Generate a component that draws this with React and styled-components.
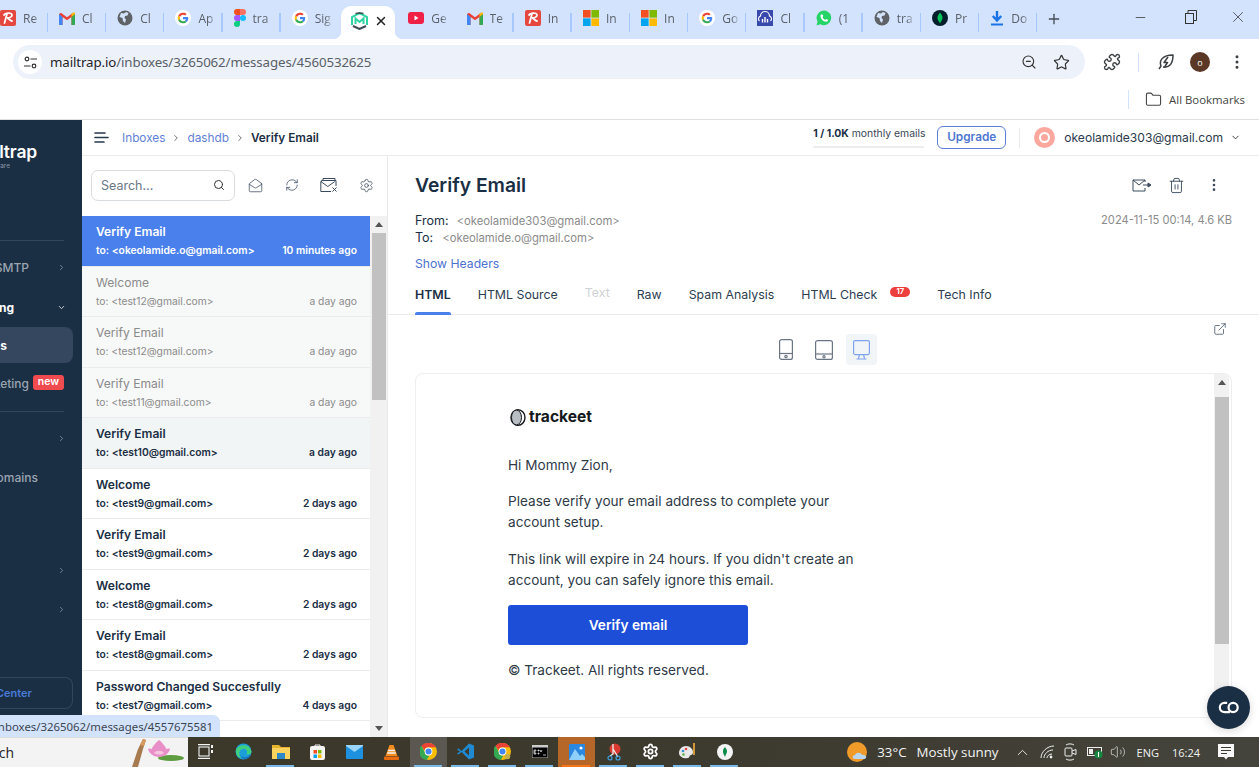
import React from "react";
import styled, { createGlobalStyle } from "styled-components";
import {
  Search, ZoomOut, Star, EllipsisVertical, Minus, X, Plus, Folder, ChevronRight, ChevronDown,
  MailOpen, RefreshCw, Settings, ExternalLink, Trash2, Puzzle, ChevronUp, Volume2,
} from "lucide-react";

const Global = createGlobalStyle`
  html, body { margin: 0; padding: 0; height: 767px; overflow: hidden; background: #fff; }
  body { font-family: Inter, "Noto Sans", sans-serif; }
  * { box-sizing: border-box; }
  svg { flex-shrink: 0; }
`;

const Page = styled.div`position: relative; width: 1259px; height: 767px; overflow: hidden; display: flex; flex-direction: column;`;

/* ---------- browser chrome ---------- */
const TabStrip = styled.div`height: 39px; background: #d3e3fd; display: flex; align-items: stretch; flex-shrink: 0;`;
const Tab = styled.div`
  width: ${p => (p.$first ? 48 : 58.2)}px; flex-shrink: 0; display: flex; align-items: center; gap: 7px;
  padding: 0 6px 3px ${p => (p.$first ? 0 : 11)}px; position: relative; overflow: hidden;
  &::after {
    content: ""; display: ${p => (p.$sep ? "block" : "none")}; position: absolute; right: 0; top: 13px; height: 19px; width: 1.5px; background: #a8c7fa;
  }
`;
const ActiveTab = styled.div`
  width: 54px; flex-shrink: 0; background: #fff; border-radius: 10px 10px 0 0; display: flex; align-items: center;
  justify-content: center; gap: 6px; padding: 0 0 4px 3px; position: relative; margin: 6px 2px 0 2.4px;
  &::before, &::after { content: ""; position: absolute; bottom: 0; width: 8px; height: 8px; }
  &::before { left: -8px; background: radial-gradient(circle at 0 0, #d3e3fd 8px, #fff 8.5px); }
  &::after { right: -8px; background: radial-gradient(circle at 100% 0, #d3e3fd 8px, #fff 8.5px); }
`;
const TabLabel = styled.span`
  font: 12px "Open Sans", sans-serif; color: #5a6068; overflow: hidden; white-space: nowrap; flex: 1; min-width: 0;
  -webkit-mask-image: linear-gradient(90deg, #000 55%, transparent 100%);
`;
const NewTab = styled.div`width: 33px; display: flex; align-items: center; justify-content: center; color: #444b55; padding-bottom: 2px;`;
const WindowButtons = styled.div`margin-left: auto; display: flex; color: #333;`;
const WindowButton = styled.div`width: ${p => p.$w}px; height: 34px; display: flex; align-items: center; justify-content: center;`;
const Toolbar = styled.div`height: 46px; display: flex; align-items: center; padding: 0 0 0 13px; background: #fff; flex-shrink: 0;`;
const Omnibox = styled.div`
  width: 1072px; height: 34px; border-radius: 17px; background: #edf2fa; display: flex; align-items: center; padding: 0 14px 0 5px; color: #333;
`;
const SiteChip = styled.div`width: 24px; height: 24px; border-radius: 50%; background: #fff; display: flex; align-items: center; justify-content: center; margin-right: 8px;`;
const Url = styled.div`font: 13.3px "Noto Sans", sans-serif; color: #5a6068; letter-spacing: -0.12px; b { font-weight: 400; color: #1f2329; } flex: 1;`;
const OmniIcons = styled.div`display: flex; gap: 16px; align-items: center; padding-right: 1px;`;
const ToolIcons = styled.div`display: flex; align-items: center; color: #3c4043; flex: 1; padding-left: 18px;`;
const VSep = styled.div`width: 1px; height: 19px; background: #d3e3fd; margin: 0 ${p => p.$m || 12}px;`;
const ProfileDot = styled.div`
  width: 20px; height: 20px; border-radius: 50%; background: #5a3825; color: #fff; font: 9px "Open Sans", sans-serif; display: flex; align-items: center;
  justify-content: center; margin: 0 18px 0 14px;
`;
const BookmarkBar = styled.div`
  height: 35px; display: flex; align-items: center; justify-content: flex-end; padding: 0 14px 6px 0; border-bottom: 1px solid #e0e0e0; flex-shrink: 0; background: #fff;
`;
const BookmarkText = styled.span`font: 11.4px "Open Sans", sans-serif; color: #444; margin-left: 7px;`;

/* ---------- app ---------- */
const App_ = styled.div`flex: 1; display: flex; min-height: 0;`;
const Sidebar = styled.aside`width: 82px; background: #1a2e44; overflow: hidden; flex-shrink: 0; display: flex; flex-direction: column; padding-top: 24px;`;
const LogoRow = styled.div`
  display: flex; justify-content: flex-end; width: 37px; font: 600 17.500px/16px Inter, sans-serif; color: #fff; white-space: nowrap; letter-spacing: -.2px;
`;
const LogoSub = styled.div`
  display: flex; justify-content: flex-end; width: 10px; font: 6.500px/10px Inter, sans-serif; color: #8b98a8; white-space: nowrap; margin-top: 1px; height: 10px;
`;
const SideDivider = styled.div`width: 64px; height: 1px; background: #33475c; margin: ${p => p.$top}px 0 0; flex-shrink: 0;`;
const NavRow = styled.div`
  width: ${p => p.$w || 66}px; height: 36px; display: flex; align-items: center; justify-content: flex-end; white-space: nowrap; flex-shrink: 0;
  margin-top: ${p => p.$top || 0}px; color: #8d99a7;
`;
const NavLabel = styled.span`
  flex-shrink: 0; font: ${p => (p.$bold ? 700 : 500)} 12px Inter, sans-serif; color: ${p => (p.$bold ? "#fff" : "#9aa5b1")}; margin-right: ${p => p.$mr || 0}px;
`;
const NavPill = styled(NavRow)`background: #35475f; border-radius: 0 8px 8px 0; padding-right: 66px;`;
const NewBadge = styled.span`
  background: #f04b4f; color: #fff; font: 600 10.5px/14px Inter, sans-serif; padding: 0 3px 1px; border-radius: 3px; width: 31px; text-align: center; flex-shrink: 0; margin-top: -2px;
`;
const HelpButton = styled.div`
  width: 73px; height: 32px; border: 1px solid #33475c; border-left: 0; border-radius: 0 8px 8px 0; margin-top: auto; margin-bottom: 28px; flex-shrink: 0;
  display: flex; align-items: center; justify-content: flex-end; padding-right: 40px; white-space: nowrap; font: 600 11px Inter, sans-serif; color: #4a7bd9;
`;
const Main = styled.div`flex: 1; display: flex; flex-direction: column; min-width: 0;`;
const TopBar = styled.header`height: 36px; border-bottom: 1px solid #e9ebec; display: flex; align-items: center; padding: 0 18px 0 12px; flex-shrink: 0;`;
const Hamburger = styled.div`margin-right: 13px; display: flex; color: #27394d;`;
const Crumb = styled.span`font: 11.8px Inter, sans-serif; color: #5f7fd6;`;
const CrumbCurrent = styled.span`font: 600 11.8px Inter, sans-serif; color: #1a2e44;`;
const CrumbSep = styled.span`display: flex; margin: 0 ${p => p.$m}px; color: #555;`;
const Usage = styled.div`margin-left: auto; display: flex; flex-direction: column; width: 111px;`;
const UsageText = styled.div`font: 10.4px/14px Inter, sans-serif; color: #384656; white-space: nowrap; b { font-weight: 700; color: #1a2e44; }`;
const UsageBar = styled.div`height: 2.5px; border-radius: 2px; background: #ececec; margin-top: 5px;`;
const Upgrade = styled.div`
  width: 69px; height: 23px; border: 1px solid #5b80d3; border-radius: 6px; color: #4f77d0; font: 600 11.800px/21px Inter, sans-serif; text-align: center; margin-left: 13px;
`;
const TopSep = styled.div`width: 1px; height: 20px; background: #ececec; margin: 0 14px 0 13px;`;
const Avatar = styled.div`
  width: 21px; height: 21px; border-radius: 50%; background: #fca89f; display: flex; align-items: center; justify-content: center; margin-right: 9px;
  &::after { content: ""; width: 7px; height: 7px; border: 2px solid #fff; border-radius: 50%; background: transparent; }
`;
const UserEmail = styled.span`font: 12.1px Inter, sans-serif; color: #2b3a4b; margin-right: 7px;`;
const Body = styled.div`flex: 1; display: flex; min-height: 0;`;
const ListColumn = styled.div`width: 306px; border-right: 1px solid #e9ebec; display: flex; flex-direction: column; flex-shrink: 0;`;
const ListTools = styled.div`height: 60px; display: flex; align-items: center; padding: 0 0 2px 9px; color: #3a4a5c; flex-shrink: 0;`;
const SearchBox = styled.div`
  width: 144px; height: 31px; border: 1px solid #d9dcdf; border-radius: 7px; display: flex; align-items: center; justify-content: space-between; padding: 0 9px; margin-right: 1.5px; flex-shrink: 0;
  font: 12.500px Inter, sans-serif; color: #6b7785;
`;
const ToolSlot = styled.div`width: 37px; display: flex; justify-content: center; flex-shrink: 0;`;
const ListScroller = styled.div`flex: 1; display: flex; min-height: 0; overflow: hidden;`;
const List = styled.div`width: 288px; flex-shrink: 0;`;
const Row = styled.div`
  height: 50.55px; padding: 7px 13px 0 14px; border-bottom: 1px solid #e9ebec;
  background: ${p => (p.$selected ? "#4a80ec" : p.$hover ? "#f2f5f6" : p.$read ? "#f7f8f8" : "#fff")};
  color: ${p => (p.$selected ? "#fff" : p.$read ? "#8b8b8b" : "#1a2e44")};
`;
const RowTitle = styled.div`font: ${p => (p.$read ? 400 : 600)} 12.1px/18px Inter, sans-serif;`;
const RowSub = styled.div`display: flex; justify-content: space-between; font: ${p => (p.$read ? 400 : 600)} 10.3px/18px Inter, sans-serif; white-space: nowrap;`;
const Scrollbar = styled.div`
  width: ${p => p.$w || 17}px; margin-right: ${p => p.$mr || 0}px; background: #f1f1f1; flex-shrink: 0; display: flex; flex-direction: column; align-items: center;
`;
const ScrollUp = styled.div`width: 0; height: 0; border: 4px solid transparent; border-top: 0; border-bottom: 5px solid #555; margin-top: 6px;`;
const ScrollDown = styled.div`width: 0; height: 0; border: 4px solid transparent; border-bottom: 0; border-top: 5px solid #555; margin-top: auto; margin-bottom: 6px;`;
const ScrollThumb = styled.div`width: 14px; height: ${p => p.$h}px; background: #c1c1c1; margin-top: ${p => p.$top}px;`;
const Detail = styled.section`flex: 1; min-width: 0; display: flex; flex-direction: column;`;
const DetailHead = styled.div`padding: 16px 27px 0;`;
const SubjectRow = styled.div`display: flex; align-items: center; justify-content: space-between; height: 26px; padding-right: 10px; color: #3a4a5c;`;
const Subject = styled.h1`margin: 0; font: 600 19.3px/26px Inter, sans-serif; color: #1a2e44;`;
const Actions = styled.div`display: flex; align-items: center; gap: 19px; svg:nth-child(2) { margin: 0 2px 0 -2px; }`;
const MetaRow = styled.div`display: flex; justify-content: space-between; margin-top: ${p => p.$top}px; font: 12.5px/17px Inter, sans-serif; color: #1a2e44;`;
const MetaAddr = styled.span`color: #8b8b8b; margin-left: ${p => p.$ml}px; font-size: 11.3px;`;
const MetaDate = styled.span`color: #8b8b8b; font-size: 11.15px;`;
const ShowHeaders = styled.div`font: 12.2px/17px Inter, sans-serif; color: #4a73d0; margin-top: 8px;`;
const TabsRow = styled.nav`display: flex; gap: 27px; padding: 0 27px; height: 43px; border-bottom: 1px solid #e9ebec; align-items: stretch; flex-shrink: 0;`;
const MailTab = styled.div`
  font: ${p => (p.$active ? 600 : 400)} 12.35px/1 Inter, sans-serif; color: ${p => (p.$disabled ? "#cfd2d6" : "#2b3d50")}; position: relative;
  padding-top: ${p => (p.$disabled ? 15 : 17)}px; display: flex; white-space: nowrap; ${p => p.$active && "color:#1a2e44;"}
  ${p => p.$active && `&::after { content: ""; position: absolute; left: 0; right: 0; bottom: -1px; height: 3px; background: #4a80ec; border-radius: 2px 2px 0 0; }`}
`;
const CountBadge = styled.span`
  background: #ee3f3f; color: #fff; font: 700 7.5px/10px Inter, sans-serif; width: 20px; height: 10px; border-radius: 5px; text-align: center; margin: -2px 0 0 13px;
`;
const DeviceRow = styled.div`height: 58px; display: flex; justify-content: center; position: relative; padding: 19px 0 0 0; flex-shrink: 0;`;
const DeviceButton = styled.div`
  width: 31px; height: 31px; border-radius: 4px; display: flex; align-items: center; justify-content: center; margin: 0 3.5px;
  background: ${p => (p.$on ? "#f2f5f7" : "transparent")}; color: ${p => (p.$on ? "#7fa3ee" : "#6c7682")};
`;
const PopOut = styled.div`position: absolute; right: 32px; top: 7px; color: #4d5b6a; display: flex;`;
const Preview = styled.div`
  margin: 0 27px; height: 345px; border: 1px solid #edeef0; border-radius: 8px; display: flex; overflow: hidden; flex-shrink: 0;
`;
const MailBody = styled.div`flex: 1; padding: 31px 0 0 92px; color: #2f3a47; font: 13.6px/21.5px Inter, sans-serif;`;
const TrackLogo = styled.div`display: flex; align-items: center; gap: 3px; height: 24px; margin: 0 0 26px 2px; font: 700 15.6px/24px Inter, sans-serif; color: #15181c;`;
const MailPara = styled.p`margin: 0 0 ${p => p.$mb ?? 14}px; width: 350px;`;
const VerifyButton = styled.div`
  width: 240px; height: 40px; border-radius: 3px; background: #1d4ed8; color: #fff; font: 600 13.7px/40px Inter, sans-serif; text-align: center; margin: 13px 0 15px;
`;
const Fab = styled.div`
  position: absolute; left: 1207px; top: 686px; width: 43px; height: 43px; border-radius: 50%; background: #1a2e44; display: flex; align-items: center; justify-content: center; box-shadow: 0 2px 8px rgba(0,0,0,.15);
`;
const StatusBubble = styled.div`
  position: absolute; left: 0; top: 715px; width: 220px; height: 22px; background: #d3e3fd; border-radius: 0 7px 0 0; display: flex; justify-content: flex-end; align-items: center; padding-right: 7px;
  font: 11.400px "Noto Sans", sans-serif; color: #3c4650; white-space: nowrap; overflow: hidden;
`;

/* ---------- taskbar ---------- */
const Taskbar = styled.footer`height: 30px; background: linear-gradient(90deg, #3b3829, #3d3a2f 60%, #45443c); display: flex; align-items: stretch; flex-shrink: 0; color: #f2f2f2;`;
const TaskSearch = styled.div`
  width: 188px; background: #f3f3f3; display: flex; align-items: center; justify-content: space-between; overflow: hidden; white-space: nowrap; border-top: 1px solid #ddd; flex-shrink: 0; padding-right: 4px;
`;
const TaskSearchText = styled.div`display: flex; justify-content: flex-end; width: 14px; font: 14px "Open Sans", sans-serif; color: #222;`;
const TaskSlot = styled.div`
  width: 37px; display: flex; align-items: center; justify-content: center; position: relative; flex-shrink: 0; background: ${p => p.$bg || "transparent"}; padding-bottom: 1px;
  ${p => p.$run && `&::after { content: ""; position: absolute; bottom: 0; left: 4px; right: 5px; height: 2px; background: ${p.$run}; }`}
`;
const Tray = styled.div`margin-left: auto; display: flex; align-items: center; font: 13.3px "Open Sans", sans-serif; white-space: nowrap; padding-right: 25px;`;
const Temp = styled.span`margin: 0 10px 0 8px;`;
const TrayIcon = styled.div`display: flex; margin-left: ${p => p.$ml || 0}px; color: #eee;`;
const TraySmall = styled.span`font-size: 11px; margin-left: ${p => p.$ml}px;`;

/* ---------- drawings ---------- */
const Gmail = () => (
  <svg width="16" height="13" viewBox="0 0 16 13">
    <path d="M0 2v10a1 1 0 001 1h2.5V5L8 8.3 12.500 5v8H15a1 1 0 001-1V2L14 .8 8 5.200 2 .8z" fill="#ea4335" />
    <path d="M0 2v10a1 1 0 001 1h2.500V5z" fill="#4285f4" /><path d="M16 2v10a1 1 0 01-1 1h-2.500V5z" fill="#34a853" />
    <path d="M12.500 5V1.500L14 .8a1.200 1.200 0 012 1.200z" fill="#fbbc04" />
  </svg>
);
const GoogleG = () => (
  <svg width="16" height="16" viewBox="0 0 48 48">
    <circle cx="24" cy="24" r="24" fill="#fff" />
    <path fill="#ea4335" d="M24 14c2.700 0 4.800 1 6.400 2.500l4.500-4.500C32 9.300 28.400 8 24 8c-6.300 0-11.700 3.600-14.300 8.800l5.300 4.100C16.200 17 19.800 14 24 14z" />
    <path fill="#4285f4" d="M39.600 24.400c0-1.200-.1-2.300-.3-3.400H24v6.400h8.800c-.4 2-1.500 3.700-3.300 4.900l5.100 4c3-2.800 5-6.900 5-11.900z" />
    <path fill="#fbbc05" d="M15 27.100c-.3-1-.5-2-.5-3.100s.2-2.100.5-3.100l-5.300-4.100C8.600 19 8 21.400 8 24s.6 5 1.700 7.200z" />
    <path fill="#34a853" d="M24 40c4.300 0 8-1.400 10.600-3.800l-5.100-4c-1.400 1-3.200 1.500-5.500 1.500-4.200 0-7.800-2.900-9-6.800l-5.300 4.100C12.300 36.400 17.700 40 24 40z" />
  </svg>
);
const Globe = () => (
  <svg width="16" height="16" viewBox="0 0 16 16">
    <circle cx="8" cy="8" r="7.500" fill="#5f6368" />
    <path d="M4 3l3 .5L9 2l2.500 1-1 2.500-2.500.5-.5 2L9 9.500 8 13l-2-2-.5-3L2.500 7z" fill="#d3e3fd" />
  </svg>
);
const RedR = () => (
  <svg width="16" height="16" viewBox="0 0 16 16">
    <rect width="16" height="16" rx="2" fill="#e5483f" />
    <path d="M4 5c1-2 8-3 8 0 0 2-3 3-5 3 2 0 3 3 5 3M7 4L4.500 13" fill="none" stroke="#fff" strokeWidth="1.800" strokeLinecap="round" />
  </svg>
);
const Figma = () => (
  <svg width="12" height="18" viewBox="0 0 12 18">
    <path d="M0 3a3 3 0 013-3h3v6H3a3 3 0 01-3-3z" fill="#f24e1e" /><path d="M6 0h3a3 3 0 010 6H6z" fill="#ff7262" />
    <path d="M0 9a3 3 0 013-3h3v6H3a3 3 0 01-3-3z" fill="#a259ff" /><circle cx="9" cy="9" r="3" fill="#1abcfe" />
    <path d="M0 15a3 3 0 013-3h3v3a3 3 0 01-6 0z" fill="#0acf83" />
  </svg>
);
const MailtrapMark = () => (
  <svg width="17" height="18" viewBox="0 0 17 18">
    <path d="M1 13V5l7.500-4L16 5v8" fill="none" stroke="#2fd4a4" strokeWidth="2" />
    <path d="M4.500 1.500L8.500 1l4 .5" fill="none" stroke="#3f4b57" strokeWidth="1.500" />
    <path d="M2 14l6.500 3 6.500-3" fill="none" stroke="#3f4b57" strokeWidth="2" />
    <path d="M4.500 12V6.500l4 3.500 4-3.500V12" fill="none" stroke="#2fd4a4" strokeWidth="2" />
  </svg>
);
const YouTube = () => (
  <svg width="16" height="12" viewBox="0 0 16 12"><rect width="16" height="12" rx="3" fill="#f01f45" /><path d="M6.500 3.500v5L10.500 6z" fill="#fff" /></svg>
);
const MsLogo = () => (
  <svg width="16" height="16" viewBox="0 0 16 16">
    <rect width="7.600" height="7.600" fill="#f25022" /><rect x="8.400" width="7.600" height="7.600" fill="#7fba00" />
    <rect y="8.400" width="7.600" height="7.600" fill="#00a4ef" /><rect x="8.400" y="8.400" width="7.600" height="7.600" fill="#ffb900" />
  </svg>
);
const CloudBox = () => (
  <svg width="16" height="16" viewBox="0 0 16 16">
    <rect width="16" height="16" fill="#3948ab" /><path d="M2.500 11a3 3 0 011-5 4.500 4.500 0 019 0 3 3 0 011 5" fill="none" stroke="#fff" strokeWidth="1.200" />
    <path d="M5.500 12.500V9M8 12.500V7M10.500 12.500V9" stroke="#fff" strokeWidth="1.400" />
  </svg>
);
const WhatsApp = () => (
  <svg width="16" height="16" viewBox="0 0 16 16">
    <path d="M.5 15.500l1.100-3.900A7.300 7.300 0 118 15.200a7.300 7.300 0 01-3.600-.9z" fill="#25d366" />
    <path d="M5.800 4.200c-.5 0-1.300.8-1.300 2 0 2.500 3 5.500 5.600 5.500 1.200 0 2-.9 2-1.500 0-.4-1.500-1.200-1.800-1.200-.3 0-.6.800-1 .8-.8 0-2.700-1.900-2.700-2.600 0-.4.700-.7.700-1.100 0-.3-.9-1.900-1.500-1.900z" fill="#fff" />
  </svg>
);
const Mongo = () => (
  <svg width="16" height="16" viewBox="0 0 16 16"><circle cx="8" cy="8" r="8" fill="#021e2b" /><path d="M8 2.500c2 2.500 2.500 4 2.500 5.500S9 11.500 8 13.500C7 11.500 5.500 10 5.500 8S6 5 8 2.500z" fill="#00c35a" /></svg>
);
const Download = () => (
  <svg width="14" height="15" viewBox="0 0 14 15"><path d="M7 0v8M2.800 5L7 9.500 11.200 5" fill="none" stroke="#1a73e8" strokeWidth="2.400" /><path d="M1 13.500h12" stroke="#1a73e8" strokeWidth="2" /></svg>
);
const Tune = () => (
  <svg width="13" height="13" viewBox="0 0 13 13" fill="none" stroke="#333" strokeWidth="1.200">
    <circle cx="3" cy="3" r="1.800" /><path d="M6.500 3H13M0 10h6.500" /><circle cx="10" cy="10" r="1.800" />
  </svg>
);
const LeafBolt = () => (
  <svg width="20" height="20" viewBox="0 0 20 20" fill="none" stroke="#3c4043" strokeWidth="1.500" strokeLinejoin="round">
    <path d="M3 17l2-3c-2-5 1-11 12-11 0 8-3 13-10 12" /><path d="M12 5L8 10.500h3.500L8.500 15" />
  </svg>
);
const RestoreIcon = () => (
  <svg width="12" height="14" viewBox="0 0 12 14" fill="none" stroke="#333" strokeWidth="1"><rect x=".5" y="3.500" width="8" height="10" /><path d="M3 3.500V.5h8.500v10H8.500" /></svg>
);
const Burger = () => (
  <svg width="15" height="11" viewBox="0 0 15 11" stroke="currentColor" strokeWidth="1.600" strokeLinecap="round"><path d="M1 1h10M1 5.500h13M1 10h9" /></svg>
);
const MailStackX = () => (
  <svg width="18" height="16" viewBox="0 0 18 16" fill="none" stroke="currentColor" strokeWidth="1"><path d="M3 3V1.500h12V3M1.500 5V3.500h14.500V9" /><path d="M11 14.500H.8v-10M.8 4.500l7 5 7-5" /><path d="M12.500 10.500l4 4M16.500 10.500l-4 4" /></svg>
);
const MailForward = () => (
  <svg width="19" height="14" viewBox="0 0 19 14" fill="none" stroke="currentColor" strokeWidth="1"><path d="M13 10v3H1V2h12v2" /><path d="M1 2l6 5 6-5" /><path d="M11 7h5" /><path d="M16 5l3 2-3 2z" fill="currentColor" /></svg>
);
const PhoneIcon = () => (
  <svg width="14" height="21" viewBox="0 0 14 21" fill="none" stroke="currentColor" strokeWidth="1.200"><rect x=".6" y=".6" width="12.800" height="19.800" rx="2" /><path d="M.6 14.500h12.800" /><circle cx="7" cy="17.500" r="1.200" /></svg>
);
const TabletIcon = () => (
  <svg width="18" height="20" viewBox="0 0 18 20" fill="none" stroke="currentColor" strokeWidth="1.200"><rect x=".6" y=".6" width="16.800" height="18.800" rx="2" /><path d="M.6 14h16.800" /><circle cx="9" cy="16.700" r="1.100" /></svg>
);
const DesktopIcon = () => (
  <svg width="17" height="20" viewBox="0 0 17 20" fill="none" stroke="currentColor" strokeWidth="1.200"><rect x=".6" y=".6" width="15.800" height="14" rx="1.500" /><path d="M6.500 14.600L5.500 18.500M10.500 14.600l1 3.900M3.500 19h10" /></svg>
);
const TrackMark = () => (
  <svg width="16" height="17" viewBox="0 0 16 17">
    <ellipse cx="8" cy="8.500" rx="7" ry="7.800" fill="none" stroke="#15181c" strokeWidth="1.400" /><ellipse cx="6.500" cy="8.500" rx="5" ry="7.400" fill="#b9bdc4" stroke="#15181c" strokeWidth="1" />
  </svg>
);
const FabGlyph = () => (
  <svg width="22" height="13" viewBox="0 0 24 14" fill="none" stroke="#fff" strokeWidth="2.400"><path d="M10 2H7a5 5 0 000 10h6" /><circle cx="16.500" cy="7" r="5" /></svg>
);
const Lotus = () => (
  <svg width="53" height="29" viewBox="0 0 53 29">
    <path d="M12 1l3 1-3 9-5 18H1l6-18z" fill="#a77a50" />
    <path d="M12 1l3 1-2 6-4-1z" fill="#d89a5a" />
    <ellipse cx="40" cy="20" rx="13" ry="3" fill="#5d9c3f" />
    <path d="M17 11c2-1 3 0 4 0 0-2 2-4 3-5 1-2 3-3 4-4 2 1 3 3 4 4 1 1 3 3 3 5 1 0 3-1 4 0-1 4-5 8-11 8s-10-4-11-8z" fill="#e88fc8" />
    <path d="M23 15c2-3 8-3 10 0-3 2-7 2-10 0z" fill="#f4c6df" />
  </svg>
);
const TaskView = () => (
  <svg width="17" height="15" viewBox="0 0 17 15" fill="none" stroke="#f2f2f2" strokeWidth="1.100"><path d="M0 .6h12M0 14.400h12" /><rect x="1" y="3" width="10" height="9" /><path d="M14 1v3M14 6v3" strokeWidth="2" /></svg>
);
const Edge = () => (
  <svg width="17" height="17" viewBox="0 0 17 17"><circle cx="8.500" cy="8.500" r="8" fill="#1c9fd8" /><path d="M1 7c2-6 14-7 15.500 2 0 2-3 3-5 2 2-3-1-6-4-5-4 1-4 6-1 9-3 0-6-3-5.500-8z" fill="#3dd17f" /><path d="M5 12c2 3 7 4 11-1-2 6-9 6-11 1z" fill="#1565c0" /></svg>
);
const Explorer = () => (
  <svg width="18" height="15" viewBox="0 0 18 15"><path d="M0 1h7l2 2h9v2H0z" fill="#e8b32d" /><rect y="4" width="18" height="11" fill="#fbd25e" /><rect x="5" y="9" width="8" height="6" fill="#2c88c9" /></svg>
);
const Store = () => (
  <svg width="15" height="16" viewBox="0 0 15 16"><rect y="2" width="15" height="14" rx="2" fill="#f4f4f4" /><path d="M5 3V1h5v2" fill="none" stroke="#f4f4f4" /><rect x="3.500" y="6" width="3.500" height="3.500" fill="#f25022" /><rect x="8" y="6" width="3.500" height="3.500" fill="#7fba00" /><rect x="3.500" y="10.500" width="3.500" height="3.500" fill="#00a4ef" /><rect x="8" y="10.500" width="3.500" height="3.500" fill="#ffb900" /></svg>
);
const MailApp = () => (
  <svg width="17" height="14" viewBox="0 0 17 14"><rect width="17" height="14" rx="1" fill="#1e90e0" /><path d="M0 1l8.500 6L17 1V0H0z" fill="#9ad4fa" /></svg>
);
const Vlc = () => (
  <svg width="15" height="16" viewBox="0 0 15 16"><path d="M5.500 1h4l4 11H1.500z" fill="#f28c1e" /><path d="M4 6.500h7M3.200 9h8.600" stroke="#f4f4f4" strokeWidth="1.500" /><rect y="12.500" width="15" height="3.500" rx="1" fill="#e86b10" /></svg>
);
const Chrome = ({ dot }) => (
  <svg width="17" height="17" viewBox="0 0 48 48">
    <circle cx="24" cy="24" r="24" fill="#fbbc04" />
    <path d="M24 0a24 24 0 0120.800 12H24a12 12 0 00-11.500 8.500L4 8A24 24 0 0124 0z" fill="#ea4335" />
    <path d="M4 8l10 18a12 12 0 0012 9.800L19 48A24 24 0 014 8z" fill="#34a853" />
    <circle cx="24" cy="24" r="11" fill="#fff" /><circle cx="24" cy="24" r="8.500" fill="#4285f4" />
    {dot && <circle cx="38" cy="38" r="8" fill="#c5b04a" />}
  </svg>
);
const VSCode = () => (
  <svg width="17" height="17" viewBox="0 0 17 17"><path d="M12 .5L4.500 8 1.500 5.500 0 6.500l3 2-3 2 1.500 1L4.500 9l7.500 7.500 5-2V2.500z" fill="#1f8ad2" /><path d="M12 4.500L7.500 8.500l4.500 4z" fill="#3d3a2f" /></svg>
);
const Cmd = () => (
  <svg width="16" height="13" viewBox="0 0 16 13"><rect width="16" height="13" fill="#000" stroke="#bbb" /><rect width="16" height="2.500" fill="#ccc" /><path d="M2 5h2v.800H2.800v2.400H4v.8H2zM6 5h1v1H6zM6 8h1v1H6zM8 5l1 2 1-2M11 10h3" stroke="#fff" strokeWidth=".7" fill="none" /></svg>
);
const Photos = () => (
  <svg width="16" height="16" viewBox="0 0 16 16"><rect width="16" height="16" rx="1" fill="#2b88e0" /><path d="M0 16L6 5l5 7 2-2 3 3v3z" fill="#8fd0fa" /><circle cx="12" cy="4" r="1.600" fill="#fff" /></svg>
);
const Snip = () => (
  <svg width="14" height="18" viewBox="0 0 14 18"><circle cx="8" cy="6" r="5.500" fill="#d9392f" /><path d="M6 1v10l-3 2M6 6l5 8" stroke="#eee" strokeWidth="1.300" fill="none" /><circle cx="3" cy="15" r="2" fill="none" stroke="#3ea0e0" strokeWidth="1.200" /><circle cx="11" cy="15" r="2" fill="none" stroke="#3ea0e0" strokeWidth="1.200" /></svg>
);
const Paint = () => (
  <svg width="17" height="17" viewBox="0 0 17 17"><path d="M7 3C2 3 0 7 0 10c0 4 5 6 9 5 2 0 1-3 3-3 1 0 2-1 2-3C14 6 11 3 7 3z" fill="#e9e9e9" /><circle cx="4" cy="8" r="1.300" fill="#2f8fdb" /><circle cx="7" cy="6" r="1.300" fill="#e34a3f" /><circle cx="4.500" cy="11.500" r="1.300" fill="#5fb246" /><path d="M15 0v12" stroke="#e5a23a" strokeWidth="1.800" /></svg>
);
const MongoApp = () => (
  <svg width="16" height="16" viewBox="0 0 16 16"><circle cx="8" cy="8" r="8" fill="#f4f4f4" /><path d="M8 3c1.600 2 2 3.300 2 4.600S8.800 10.800 8 13C7.200 10.800 6 9.600 6 7.600S6.400 5 8 3z" fill="#0d8a4a" /></svg>
);
const Weather = () => (
  <svg width="22" height="22" viewBox="0 0 22 22"><circle cx="10" cy="11" r="10" fill="#f09a2a" /><path d="M8 18c-3 0-3-4 0-4 1-3 6-3 7 0 4-1 6 4 2 4z" fill="#b9d6ef" /></svg>
);
const WifiTray = () => (
  <svg width="15" height="14" viewBox="0 0 15 14" fill="none" stroke="#eee" strokeWidth="1"><path d="M1 13C1 7 7 1 14 1M4 13c0-4 4-8 9-8M7 13c0-2 2-4 5-4" /><circle cx="11" cy="12" r="1.400" fill="#eee" stroke="none" /></svg>
);
const CameraTray = () => (
  <svg width="13" height="18" viewBox="0 0 13 18" fill="none" stroke="#eee" strokeWidth="1"><path d="M2 2c2-1.500 6-1.500 8 0M2 16c2 1.500 6 1.500 8 0" /><rect x="1" y="5" width="7" height="8" rx="1" /><path d="M8 8l4-1.500v5L8 10" /></svg>
);
const BatteryTray = () => (
  <svg width="16" height="14" viewBox="0 0 16 14"><rect x=".5" y="2.500" width="14" height="8" fill="none" stroke="#eee" /><rect x="2" y="4" width="4" height="5" fill="#eee" /><circle cx="11.500" cy="9.500" r="4" fill="#17863f" /><path d="M11.500 7v5" stroke="#fff" /></svg>
);
const NotifyTray = () => (
  <svg width="16" height="16" viewBox="0 0 16 16"><path d="M0 0h16v13h-6l-2 2.500L6 13H0z" fill="#f7f7f7" /><path d="M3 3.500h10M3 6.500h10M3 9.500h6" stroke="#3d3a2f" /></svg>
);

/* ---------- data ---------- */
const tabs = [
  [RedR, "Re", 1, 1], [Gmail, "Cl", 0, 1], [Globe, "Cl", 0, 1], [GoogleG, "Ap", 0, 1], [Figma, "tra", 0, 1], [GoogleG, "Sig", 0, 0],
];
const tabs2 = [
  [YouTube, "Ge", 0], [Gmail, "Te", 1], [RedR, "In", 1], [MsLogo, "In", 1], [MsLogo, "In", 1], [GoogleG, "Go", 1], [CloudBox, "Cl", 1], [WhatsApp, "(1", 1], [Globe, "tra", 1], [Mongo, "Pr", 1], [Download, "Do", 1],
];
const rows = [
  ["Verify Email", "<okeolamide.o@gmail.com>", "10 minutes ago", { $selected: true }],
  ["Welcome", "<test12@gmail.com>", "a day ago", { $read: true }],
  ["Verify Email", "<test12@gmail.com>", "a day ago", { $read: true }],
  ["Verify Email", "<test11@gmail.com>", "a day ago", { $read: true }],
  ["Verify Email", "<test10@gmail.com>", "a day ago", { $hover: true }],
  ["Welcome", "<test9@gmail.com>", "2 days ago", {}],
  ["Verify Email", "<test9@gmail.com>", "2 days ago", {}],
  ["Welcome", "<test8@gmail.com>", "2 days ago", {}],
  ["Verify Email", "<test8@gmail.com>", "2 days ago", {}],
  ["Password Changed Succesfully", "<test7@gmail.com>", "4 days ago", {}],
  ["", "", "", {}],
];
const blue = "#76b9ed";
const task = [
  [TaskView], [Edge], [Explorer, blue], [Store], [MailApp], [Vlc],
  [Chrome, blue, "#5a5850"], [VSCode, blue], [() => <Chrome dot />, blue], [Cmd, blue],
  [Photos, "#f5761a", "#b5672a"], [Snip, blue], [() => <Settings size={17} color="#fff" strokeWidth={2.500} />, blue], [Paint, blue], [MongoApp, blue],
];

export default function App() {
  return (
    <Page>
      <Global />
      <TabStrip>
        {tabs.map(([I, t, first, sep], i) => (
          <Tab key={i} $first={!!first} $sep={!!sep}><I /><TabLabel>{t}</TabLabel></Tab>
        ))}
        <ActiveTab><MailtrapMark /><X size={14} color="#222" strokeWidth={2.500} /></ActiveTab>
        {tabs2.map(([I, t, sep], i) => (
          <Tab key={i} $sep={!!sep}><I /><TabLabel>{t}</TabLabel></Tab>
        ))}
        <NewTab><Plus size={16} strokeWidth={2} /></NewTab>
        <WindowButtons>
          <WindowButton $w={50}><Minus size={15} strokeWidth={1.200} /></WindowButton>
          <WindowButton $w={52}><RestoreIcon /></WindowButton>
          <WindowButton $w={42}><X size={18} strokeWidth={1} /></WindowButton>
        </WindowButtons>
      </TabStrip>
      <Toolbar>
        <Omnibox>
          <SiteChip><Tune /></SiteChip>
          <Url><b>mailtrap.io</b>/inboxes/3265062/messages/4560532625</Url>
          <OmniIcons>
            <ZoomOut size={16} strokeWidth={1.700} />
            <Star size={17} strokeWidth={1.700} />
          </OmniIcons>
        </Omnibox>
        <ToolIcons>
          <Puzzle size={18} strokeWidth={1.800} />
          <VSep $m={17} />
          <LeafBolt />
          <ProfileDot>o</ProfileDot>
          <EllipsisVertical size={18} />
        </ToolIcons>
      </Toolbar>
      <BookmarkBar>
        <VSep $m={16} />
        <Folder size={17} color="#444" strokeWidth={1.500} />
        <BookmarkText>All Bookmarks</BookmarkText>
      </BookmarkBar>
      <App_>
        <Sidebar>
          <LogoRow>mailtrap</LogoRow>
          <LogoSub>by railsware</LogoSub>
          <SideDivider $top={69} />
          <NavRow $top={8}><NavLabel $mr={28}>Email API/SMTP</NavLabel><ChevronRight size={9} /></NavRow>
          <NavRow $top={4}><NavLabel $bold $mr={43}>Email Testing</NavLabel><ChevronDown size={9} color="#fff" /></NavRow>
          <NavPill $w={73} $top={2}><NavLabel $bold>Inboxes</NavLabel></NavPill>
          <NavRow $w={64} $top={2}><NavLabel $mr={4}>Email Marketing</NavLabel><NewBadge>new</NewBadge></NavRow>
          <SideDivider $top={10} />
          <NavRow $top={8}><ChevronRight size={9} /></NavRow>
          <NavRow $w={64} $top={3}><NavLabel $mr={26}>Sending Domains</NavLabel></NavRow>
          <NavRow $top={57}><ChevronRight size={9} /></NavRow>
          <NavRow $top={3}><ChevronRight size={9} /></NavRow>
          <HelpButton>Help Center</HelpButton>
        </Sidebar>
        <Main>
          <TopBar>
            <Hamburger><Burger /></Hamburger>
            <Crumb>Inboxes</Crumb>
            <CrumbSep $m={6}><ChevronRight size={10} /></CrumbSep>
            <Crumb>dashdb</Crumb>
            <CrumbSep $m={6}><ChevronRight size={10} /></CrumbSep>
            <CrumbCurrent>Verify Email</CrumbCurrent>
            <Usage>
              <UsageText><b>1 / 1.0K</b> monthly emails</UsageText>
              <UsageBar />
            </Usage>
            <Upgrade>Upgrade</Upgrade>
            <TopSep />
            <Avatar />
            <UserEmail>okeolamide303@gmail.com</UserEmail>
            <ChevronDown size={11} color="#333" />
          </TopBar>
          <Body>
            <ListColumn>
              <ListTools>
                <SearchBox>Search...<Search size={12} color="#333" /></SearchBox>
                <ToolSlot><MailOpen size={15} strokeWidth={1.200} /></ToolSlot>
                <ToolSlot><RefreshCw size={14} strokeWidth={1.300} /></ToolSlot>
                <ToolSlot><MailStackX /></ToolSlot>
                <ToolSlot><Settings size={15} strokeWidth={1.200} /></ToolSlot>
              </ListTools>
              <ListScroller>
                <List>
                  {rows.map(([title, to, when, st], i) => (
                    <Row key={i} {...st}>
                      <RowTitle $read={st.$read}>{title}</RowTitle>
                      <RowSub $read={st.$read}>{to && <span>to: {to}</span>}<span>{when}</span></RowSub>
                    </Row>
                  ))}
                </List>
                <Scrollbar>
                  <ScrollUp />
                  <ScrollThumb $top={6} $h={167} />
                  <ScrollDown />
                </Scrollbar>
              </ListScroller>
            </ListColumn>
            <Detail>
              <DetailHead>
                <SubjectRow>
                  <Subject>Verify Email</Subject>
                  <Actions>
                    <MailForward />
                    <Trash2 size={17} strokeWidth={1.300} />
                    <EllipsisVertical size={16} />
                  </Actions>
                </SubjectRow>
                <MetaRow $top={14}>
                  <span>From:<MetaAddr $ml={8}>&lt;okeolamide303@gmail.com&gt;</MetaAddr></span>
                  <MetaDate>2024-11-15 00:14, 4.6 KB</MetaDate>
                </MetaRow>
                <MetaRow $top={-1}>
                  <span>To:<MetaAddr $ml={9}>&lt;okeolamide.o@gmail.com&gt;</MetaAddr></span>
                </MetaRow>
                <ShowHeaders>Show Headers</ShowHeaders>
              </DetailHead>
              <TabsRow>
                <MailTab $active>HTML</MailTab>
                <MailTab>HTML Source</MailTab>
                <MailTab $disabled>Text</MailTab>
                <MailTab>Raw</MailTab>
                <MailTab>Spam Analysis</MailTab>
                <MailTab>HTML Check<CountBadge>17</CountBadge></MailTab>
                <MailTab>Tech Info</MailTab>
              </TabsRow>
              <DeviceRow>
                <DeviceButton><PhoneIcon /></DeviceButton>
                <DeviceButton><TabletIcon /></DeviceButton>
                <DeviceButton $on><DesktopIcon /></DeviceButton>
                <PopOut><ExternalLink size={14} strokeWidth={1.400} /></PopOut>
              </DeviceRow>
              <Preview>
                <MailBody>
                  <TrackLogo><TrackMark />trackeet</TrackLogo>
                  <MailPara>Hi Mommy Zion,</MailPara>
                  <MailPara $mb={15}>Please verify your email address to complete your account setup.</MailPara>
                  <MailPara $mb={0}>This link will expire in 24 hours. If you didn't create an account, you can safely ignore this email.</MailPara>
                  <VerifyButton>Verify email</VerifyButton>
                  <MailPara $mb={0}>© Trackeet. All rights reserved.</MailPara>
                </MailBody>
                <Scrollbar $w={15} $mr={2}>
                  <ScrollUp />
                  <ScrollThumb $top={12} $h={247} />
                  <ScrollDown />
                </Scrollbar>
              </Preview>
            </Detail>
          </Body>
        </Main>
      </App_>
      <Taskbar>
        <TaskSearch>
          <TaskSearchText>Type here to search</TaskSearchText>
          <Lotus />
        </TaskSearch>
        {task.map(([I, run, bg], i) => (
          <TaskSlot key={i} $run={run} $bg={bg}><I /></TaskSlot>
        ))}
        <Tray>
          <Weather />
          <Temp>33°C</Temp>
          <span>Mostly sunny</span>
          <TrayIcon $ml={15.5}><ChevronUp size={17} strokeWidth={1.300} /></TrayIcon>
          <TrayIcon $ml={9}><WifiTray /></TrayIcon>
          <TrayIcon $ml={9}><CameraTray /></TrayIcon>
          <TrayIcon $ml={9.5}><BatteryTray /></TrayIcon>
          <TrayIcon $ml={7}><Volume2 size={16} strokeWidth={1} /></TrayIcon>
          <TraySmall $ml={11}>ENG</TraySmall>
          <TraySmall $ml={13}>16:24</TraySmall>
          <TrayIcon $ml={18}><NotifyTray /></TrayIcon>
        </Tray>
      </Taskbar>
      <StatusBubble>https://mailtrap.io/inboxes/3265062/messages/4557675581</StatusBubble>
      <Fab><FabGlyph /></Fab>
    </Page>
  );
}
